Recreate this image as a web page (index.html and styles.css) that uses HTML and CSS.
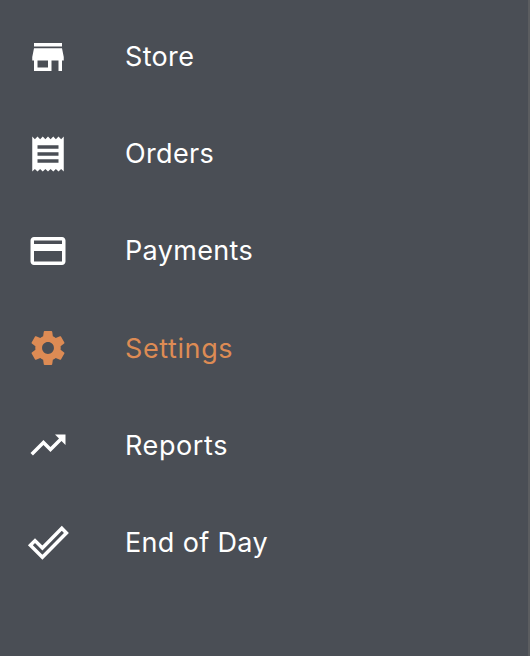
FILE: index.html
```html
<!DOCTYPE html>
<html lang="en">
<head>
    <meta charset="UTF-8">
    <meta name="viewport" content="width=device-width, initial-scale=1.0">
    <title>Menu</title>
    <link rel="stylesheet" href="styles.css">
</head>
<body>
    <nav class="sidebar">
        <ul>
            <li><a href="#">
                <svg class="icon" viewBox="0 0 24 24"><path d="M20 4H4v2h16V4zm1 10v-2l-1-5H4l-1 5v2h1v6h10v-6h4v6h2v-6h1zm-9 4H6v-4h6v4z"/></svg>
                <span>Store</span>
            </a></li>
            <li><a href="#">
                <svg class="icon" viewBox="0 0 24 24"><path d="M18 17H6v-2h12v2zm0-4H6v-2h12v2zm0-4H6V7h12v2zM3 22l1.5-1.5L6 22l1.5-1.5L9 22l1.5-1.5L12 22l1.5-1.5L15 22l1.5-1.5L18 22l1.5-1.5L21 22V2l-1.5 1.5L18 2l-1.5 1.5L15 2l-1.5 1.5L12 2l-1.5 1.5L9 2 7.5 3.5 6 2 4.500 3.5 3 2v20z"/></svg>
                <span>Orders</span>
            </a></li>
            <li><a href="#">
                <svg class="icon" viewBox="0 0 24 24"><path d="M20 4H4c-1.110 0-1.990.89-1.990 2L2 18c0 1.110.89 2 2 2h16c1.110 0 2-.89 2-2V6c0-1.110-.89-2-2-2zm0 14H4v-6h16v6zm0-10H4V6h16v2z"/></svg>
                <span>Payments</span>
            </a></li>
            <li><a href="#" class="active">
                <svg class="icon" viewBox="-0.4 -0.4 24.8 24.8"><path d="M19.430 12.980c.04-.32.07-.64.07-.98s-.03-.66-.07-.98l2.110-1.650c.19-.15.24-.42.12-.64l-2-3.460c-.12-.22-.39-.3-.61-.22l-2.490 1c-.52-.4-1.080-.73-1.690-.98l-.38-2.650C14.460 2.180 14.250 2 14 2h-4c-.25 0-.46.18-.49.42l-.38 2.650c-.61.25-1.170.59-1.690.98l-2.490-1c-.23-.09-.49 0-.61.22l-2 3.460c-.13.22-.07.49.12.64l2.110 1.650c-.04.32-.07.65-.07.98s.03.66.07.98l-2.110 1.650c-.19.15-.24.42-.12.64l2 3.460c.12.22.39.3.61.22l2.490-1c.52.4 1.080.73 1.690.98l.38 2.650c.03.24.24.42.49.42h4c.25 0 .46-.18.49-.42l.38-2.650c.61-.25 1.170-.59 1.690-.98l2.490 1c.23.09.49 0 .61-.22l2-3.460c.12-.22.07-.49-.12-.64l-2.110-1.650zM12 15.500c-1.930 0-3.500-1.570-3.500-3.500s1.570-3.500 3.500-3.500 3.500 1.570 3.500 3.500-1.570 3.500-3.500 3.500z"/></svg>
                <span class="wide">Settings</span>
            </a></li>
            <li><a href="#">
                <svg class="icon" viewBox="0 0 24 24"><path d="M16 6l2.290 2.290-4.880 4.880-4-4L2 16.590 3.410 18l6-6 4 4 6.300-6.290L22 12V6z"/></svg>
                <span class="wide">Reports</span>
            </a></li>
            <li><a href="#">
                <svg class="icon" viewBox="0 0 42 42"><path class="outline" d="M3.400 23.200l4.600-4.600 7.400 7.400L34.800 6.300l4.600 4.600-24 24.300z"/></svg>
                <span>End of Day</span>
            </a></li>
        </ul>
    </nav>
</body>
</html>
```
FILE: styles.css
```css
body {
    margin: 0;
    background-color: #4a4e55;
    font-family: Inter, "Liberation Sans", sans-serif;
}
.sidebar {
    box-sizing: border-box;
    height: 656px;
    padding-top: 8px;
    border-right: 2px solid #5b5d60;
    overflow: hidden;
}
.sidebar ul {
    list-style: none;
    margin: 0;
    padding: 0;
}
.sidebar a {
    display: flex;
    align-items: center;
    gap: 55.6px;
    height: 97.2px;
    padding-left: 27.4px;
    color: #fff;
    text-decoration: none;
    font-size: 27px;
    letter-spacing: 0.35px;
}
.sidebar a.active {
    color: #dd8b54;
}
.sidebar .wide {
    letter-spacing: 0.6px;
}
.icon {
    width: 42px;
    height: 42px;
    fill: currentColor;
    overflow: visible;
}
.outline {
    fill: none;
    stroke: currentColor;
    stroke-width: 3.5;
}
```
